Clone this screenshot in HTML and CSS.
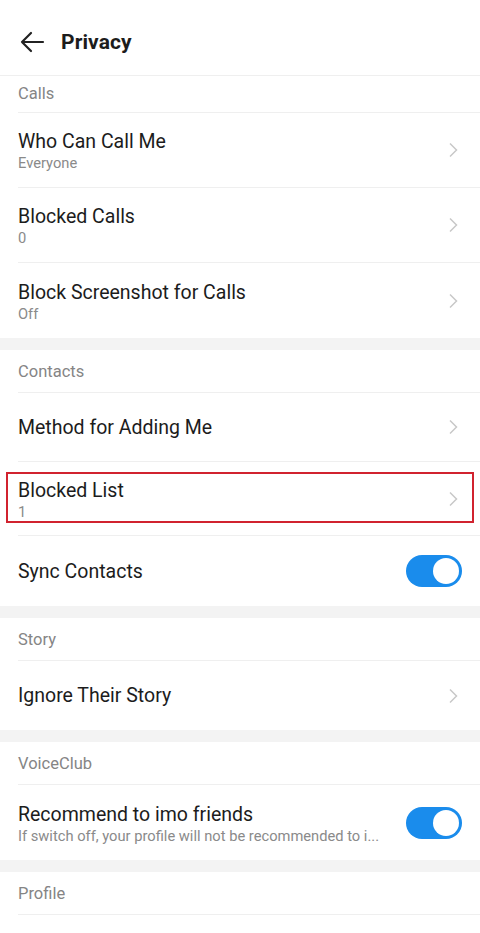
FILE: index.html
```html
<!DOCTYPE html>
<html>
<head>
<meta charset="utf-8">
<link rel="stylesheet" href="styles.css">
</head>
<body>
<div class="app">
  <header class="topbar">
    <svg class="back" width="26" height="22" viewBox="0 0 26 22"><path d="M24 11H3M12 2L3 11l9 9" fill="none" stroke="#222" stroke-width="2.2" stroke-linecap="round" stroke-linejoin="round"/></svg>
    <h1 class="title">Privacy</h1>
  </header>

  <section class="group">
    <div class="sec-head first">Calls</div>
    <div class="row two"><div class="txt"><div class="main">Who Can Call Me</div><div class="sub">Everyone</div></div><svg class="chev" width="10" height="16" viewBox="0 0 10 16"><path d="M2 1.5l6.5 6.5L2 14.5" fill="none" stroke="#c8c8c8" stroke-width="1.5"/></svg></div>
    <div class="row two"><div class="txt"><div class="main">Blocked Calls</div><div class="sub">0</div></div><svg class="chev" width="10" height="16" viewBox="0 0 10 16"><path d="M2 1.5l6.5 6.5L2 14.5" fill="none" stroke="#c8c8c8" stroke-width="1.5"/></svg></div>
    <div class="row two last"><div class="txt"><div class="main">Block Screenshot for Calls</div><div class="sub">Off</div></div><svg class="chev" width="10" height="16" viewBox="0 0 10 16"><path d="M2 1.5l6.5 6.5L2 14.5" fill="none" stroke="#c8c8c8" stroke-width="1.5"/></svg></div>
  </section>

  <section class="group">
    <div class="sec-head">Contacts</div>
    <div class="row one"><div class="txt"><div class="main">Method for Adding Me</div></div><svg class="chev" width="10" height="16" viewBox="0 0 10 16"><path d="M2 1.5l6.5 6.5L2 14.5" fill="none" stroke="#c8c8c8" stroke-width="1.5"/></svg></div>
    <div class="row two short highlight"><div class="txt"><div class="main">Blocked List</div><div class="sub">1</div></div><svg class="chev" width="10" height="16" viewBox="0 0 10 16"><path d="M2 1.5l6.5 6.5L2 14.5" fill="none" stroke="#c8c8c8" stroke-width="1.5"/></svg><span class="mark"></span></div>
    <div class="row one tall last"><div class="txt"><div class="main">Sync Contacts</div></div><span class="toggle"><span class="knob"></span></span></div>
  </section>

  <section class="group">
    <div class="sec-head">Story</div>
    <div class="row one last"><div class="txt"><div class="main">Ignore Their Story</div></div><svg class="chev" width="10" height="16" viewBox="0 0 10 16"><path d="M2 1.5l6.5 6.5L2 14.5" fill="none" stroke="#c8c8c8" stroke-width="1.5"/></svg></div>
  </section>

  <section class="group">
    <div class="sec-head">VoiceClub</div>
    <div class="row two last"><div class="txt"><div class="main">Recommend to imo friends</div><div class="sub">If switch off, your profile will not be recommended to i...</div></div><span class="toggle"><span class="knob"></span></span></div>
  </section>

  <section class="group">
    <div class="sec-head">Profile</div>
  </section>
</div>
</body>
</html>
```

FILE: styles.css
```css
* { box-sizing: border-box; }
html, body { margin: 0; padding: 0; background: #ffffff; }
body { font-family: Roboto, "Noto Sans", "Liberation Sans", sans-serif; color: #1c1c1c; }
.app { width: 480px; min-height: 933px; background: #fff; }

.topbar { height: 76px; display: flex; align-items: center; padding-left: 19px; padding-top: 9px; border-bottom: 1px solid #efefef; }
.back { display: block; margin-right: 16px; }
.title { margin: 0; font-size: 21px; font-weight: 700; color: #1c1c1c; letter-spacing: 0.1px; }

.group { background: #fff; border-bottom: 12px solid #f3f3f3; }
.group:last-child { border-bottom: 0; }

.sec-head { height: 43px; display: flex; align-items: center; margin-left: 18px; padding-top: 1px; font-size: 16.5px; color: #858585; border-bottom: 1px solid #efefef; }
.sec-head.first { height: 37px; padding-top: 0; padding-bottom: 2px; }

.row { position: relative; display: flex; align-items: center; margin-left: 18px; padding-right: 18px; border-bottom: 1px solid #efefef; }
.row.two { height: 75px; }
.row.two.short { height: 74px; }
.row.two .txt { padding-top: 3px; }
.row.one { height: 69px; }
.row.one.tall { height: 70px; }
.row.last { border-bottom: 0; }
.txt { flex: 1; min-width: 0; }
.main { font-size: 19.5px; line-height: 23px; color: #1c1c1c; }
.sub { font-size: 14.7px; line-height: 20px; color: #8a8a8a; white-space: nowrap; }
.chev { flex: none; margin-right: 4px; }

.highlight .mark { position: absolute; left: -12px; right: 6px; top: 10px; bottom: 12px; border: 2px solid #d1232f; pointer-events: none; }

.toggle { flex: none; width: 56px; height: 32px; border-radius: 16px; background: #1a8cec; display: flex; align-items: center; justify-content: flex-end; padding-right: 3px; }
.knob { width: 26px; height: 26px; border-radius: 50%; background: #fff; }
```
